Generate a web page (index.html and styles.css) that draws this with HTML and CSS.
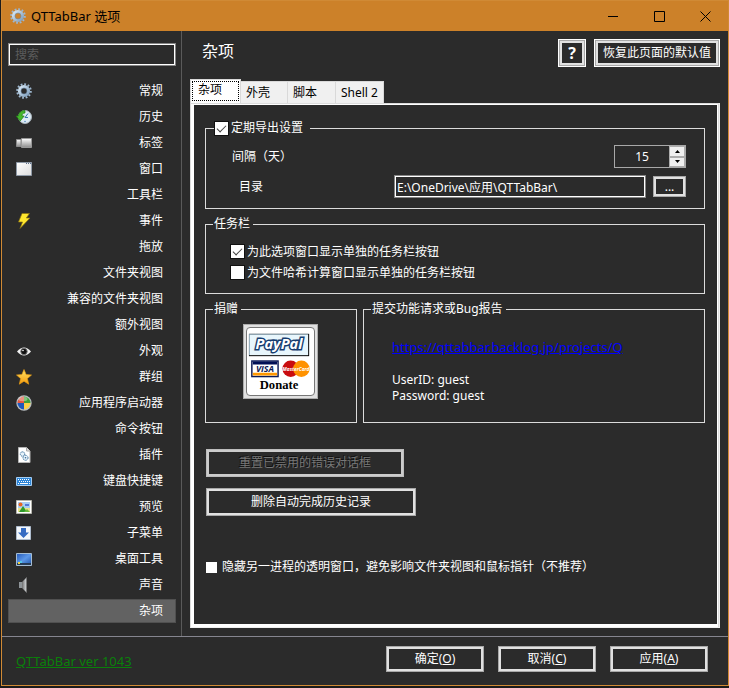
FILE: index.html
```html
<!DOCTYPE html>
<html lang="zh-CN">
<head>
<meta charset="utf-8">
<title>QTTabBar 选项</title>
<link rel="stylesheet" href="styles.css">
</head>
<body>
<svg class="defs" width="0" height="0" aria-hidden="true">
  <defs>
    <linearGradient id="steel" x1="0" y1="0" x2="1" y2="1"><stop offset="0" stop-color="#d7e8f6"/><stop offset="1" stop-color="#7f9fbd"/></linearGradient>
    <linearGradient id="silver" x1="0" y1="0" x2="0" y2="1"><stop offset="0" stop-color="#ffffff"/><stop offset="1" stop-color="#8c8c8c"/></linearGradient>
    <linearGradient id="sheet" x1="0" y1="0" x2="1" y2="1"><stop offset="0" stop-color="#ffffff"/><stop offset="1" stop-color="#dcdcdc"/></linearGradient>
    <linearGradient id="gold" x1="0" y1="0" x2="0" y2="1"><stop offset="0" stop-color="#ffe566"/><stop offset="1" stop-color="#f59a0c"/></linearGradient>
    <linearGradient id="blue" x1="0" y1="0" x2="1" y2="1"><stop offset="0" stop-color="#2458b8"/><stop offset=".5" stop-color="#5c98e8"/><stop offset="1" stop-color="#1d50a8"/></linearGradient>
    <linearGradient id="cone" x1="0" y1="0" x2="1" y2="0"><stop offset="0" stop-color="#6e6e6e"/><stop offset="1" stop-color="#d8dcdf"/></linearGradient>
    <g id="gear">
      <circle cx="8" cy="8" r="6.8" fill="none" stroke="#9db7cf" stroke-width="2" stroke-dasharray="1.8 1.76"/>
      <circle cx="8" cy="8" r="4.6" fill="none" stroke="url(#steel)" stroke-width="3"/>
      <circle cx="8" cy="8" r="3" fill="none" stroke="#6f8ba8" stroke-width=".6"/>
    </g>
  </defs>
</svg>
<div class="window">
  <header class="titlebar">
    <svg class="icon" viewBox="0 0 16 16"><use href="#gear"/></svg>
    <span class="caption">QTTabBar 选项</span>
    <button class="sys" aria-label="最小化"><svg viewBox="0 0 11 11"><path d="M0 5.5h10"/></svg></button>
    <button class="sys" aria-label="最大化"><svg viewBox="0 0 11 11"><path d="M.5.5h10v10h-10z"/></svg></button>
    <button class="sys" aria-label="关闭"><svg viewBox="0 0 11 11"><path d="M.5.5l10 10M10.500.5l-10 10"/></svg></button>
  </header>

  <div class="body">
    <nav class="sidebar">
      <input class="field search" type="text" placeholder="搜索" aria-label="搜索">
      <ul class="menu">
        <li><button><svg class="icon" viewBox="0 0 16 16"><use href="#gear"/></svg>常规</button></li>
        <li><button><svg class="icon" viewBox="0 0 16 16"><circle cx="9" cy="8" r="6.500" fill="#dcebf5" stroke="#a9b4bb"/><path d="M9 8.500l3-4M9 8.500h3" stroke="#3978b0" fill="none"/><circle cx="9" cy="12.500" r=".7" fill="#3978b0"/><path d="M9 1.500C5 1.500 2.500 4 2.500 7H.2l4 5 4-5H6c0-2 1-3 3-3z" fill="#45b72c" stroke="#1f7d14" stroke-width=".7"/></svg>历史</button></li>
        <li><button><svg class="icon" viewBox="0 0 16 16"><path d="M.5 4.500H5v7H.5z" fill="url(#silver)" stroke="#8c8c8c"/><path d="M5.500 3.500h10v9h-10z" fill="url(#silver)" stroke="#999"/></svg>标签</button></li>
        <li><button><svg class="icon" viewBox="0 0 16 16"><path d="M.5 1.500h15v13H.5z" fill="url(#sheet)" stroke="#8e99a6"/><path d="M10 2.500h1m1 0h1m1 0h1" stroke="#5d6f8a"/></svg>窗口</button></li>
        <li><button>工具栏</button></li>
        <li><button><svg class="icon" viewBox="0 0 16 16"><path d="M6 .5h7.500L10.300 5H14L4 15.500 6.500 9H2.500z" fill="#ffe72e" stroke="#8d7310" stroke-width=".7"/></svg>事件</button></li>
        <li><button>拖放</button></li>
        <li><button>文件夹视图</button></li>
        <li><button>兼容的文件夹视图</button></li>
        <li><button>额外视图</button></li>
        <li><button><svg class="icon" viewBox="0 0 16 16"><path d="M1 8.500Q4.500 4.500 8 4.500t7 4Q11.500 12.500 8 12.500t-7-4z" fill="#f2f2f2"/><circle cx="8" cy="8.500" r="3.200" fill="#111" stroke="#777"/><circle cx="7" cy="7.500" r=".8" fill="#fff"/></svg>外观</button></li>
        <li><button><svg class="icon" viewBox="0 0 16 16"><path d="M8 .5l2.100 5 5.400.5-4.100 3.600 1.300 5.600L8 12.200l-4.700 3 1.300-5.600L.5 6l5.400-.5z" fill="url(#gold)" stroke="#e39a14" stroke-width=".7"/></svg>群组</button></li>
        <li><button><svg class="icon" viewBox="0 0 16 16"><circle cx="8" cy="8" r="7.700" fill="#b9bfc2"/><path d="M8 8V1.500A6.500 6.500 0 0 0 1.500 8z" fill="#e3573f"/><path d="M8 8h6.500A6.500 6.500 0 0 0 8 1.500z" fill="#3fa03a"/><path d="M8 8v6.500A6.500 6.500 0 0 0 14.500 8z" fill="#fbd046"/><path d="M8 8H1.500A6.500 6.500 0 0 0 8 14.500z" fill="#1f58bc"/><ellipse cx="7" cy="4" rx="4.500" ry="2.200" fill="#fff" opacity=".35"/></svg>应用程序启动器</button></li>
        <li><button>命令按钮</button></li>
        <li><button><svg class="icon" viewBox="0 0 16 16"><path d="M2.500.5h8l3.500 3.500v11.500H2.500z" fill="#fff" stroke="#b5b5b5"/><path d="M10.500.5V4H14" fill="#ddd" stroke="#aaa"/><circle cx="6.500" cy="7" r="2.200" fill="#e8f3fb" stroke="#356c99" stroke-dasharray="1.200 .6"/><circle cx="9.500" cy="10.800" r="2.500" fill="#e8f3fb" stroke="#356c99" stroke-dasharray="1.200 .6"/><circle cx="9.500" cy="10.800" r=".8" fill="#356c99"/></svg>插件</button></li>
        <li><button><svg class="icon" viewBox="0 0 16 16"><path d="M.5 4.500h15v8H.5z" fill="#2e86d8" stroke="#a4cdf2"/><path d="M2 6.500h12M3 8.500h11" stroke="#fff" stroke-dasharray="1 1"/><path d="M2 10.500h1m1 0h8m1 0h1" stroke="#fff"/></svg>键盘快捷键</button></li>
        <li><button><svg class="icon" viewBox="0 0 16 16"><path d="M.5 1.500h15v13H.5z" fill="#fff" stroke="#b7b7ae"/><path d="M2 3h12v6H2z" fill="#a8cdf5"/><path d="M2 9h12v4H2z" fill="#e9e28a"/><path d="M3 13l4-6 4 6z" fill="#2f9a2b"/><path d="M8 13l3-3 3 3z" fill="#68bb3d"/><circle cx="4.500" cy="5.500" r="2" fill="#e8651f"/><path d="M9 5h4v2H9z" fill="#5277d8"/></svg>预览</button></li>
        <li><button><svg class="icon" viewBox="0 0 16 16"><path d="M.5 1.500h14v13H.5z" fill="#f3f7fb" stroke="#aebccd"/><path d="M5 3h5v4.500h3L7.500 13 2 7.500h3z" fill="#356bc2"/></svg>子菜单</button></li>
        <li><button><svg class="icon" viewBox="0 0 16 16"><path d="M.5 2.500h15v12H.5z" fill="url(#blue)" stroke="#a5bdd3"/><path d="M1 12h14v2H1z" fill="#263b55"/><path d="M2 11h2v2H2z" fill="#f5d33d"/><path d="M4 10h2v2H4z" fill="#54c8e8"/></svg>桌面工具</button></li>
        <li><button><svg class="icon" viewBox="0 0 16 16"><path d="M3 5h3v6H3z" fill="#8d9397"/><path d="M6 5l4.500-4.500v15L6 11z" fill="url(#cone)"/><path d="M10.500.5v15" stroke="#777"/></svg>声音</button></li>
        <li><button class="selected" aria-current="page">杂项</button></li>
      </ul>
    </nav>

    <main class="main">
      <div class="heading">
        <h1>杂项</h1>
        <button class="btn default help" aria-label="帮助"><b>?</b></button>
        <button class="btn default">恢复此页面的默认值</button>
      </div>
      <div class="tabs" role="tablist">
        <button class="tab active" role="tab" aria-selected="true">杂项</button>
        <button class="tab" role="tab">外壳</button>
        <button class="tab" role="tab">脚本</button>
        <button class="tab" role="tab">Shell 2</button>
      </div>
      <section class="panel" role="tabpanel">
        <div class="page">
          <fieldset class="group export">
            <legend><label class="check"><input type="checkbox" checked>定期导出设置</label></legend>
            <div class="row">
              <label for="days">间隔（天）</label>
              <span class="spinner">
                <input id="days" type="text" inputmode="numeric" value="15">
                <span class="arrows">
                  <button aria-label="增加"><svg viewBox="0 0 5 3"><path d="M0 3h5L2.500 0z"/></svg></button>
                  <button aria-label="减少"><svg viewBox="0 0 5 3"><path d="M0 0h5L2.500 3z"/></svg></button>
                </span>
              </span>
            </div>
            <div class="row directory">
              <label for="dir">目录</label>
              <input id="dir" class="field" type="text" value="E:\OneDrive\应用\QTTabBar\">
              <button class="btn browse" aria-label="浏览">...</button>
            </div>
          </fieldset>

          <fieldset class="group taskbar">
            <legend>任务栏</legend>
            <label class="check"><input type="checkbox" checked>为此选项窗口显示单独的任务栏按钮</label>
            <label class="check"><input type="checkbox">为文件哈希计算窗口显示单独的任务栏按钮</label>
          </fieldset>

          <div class="pair">
            <fieldset class="group donate">
              <legend>捐赠</legend>
              <button class="paypal" aria-label="PayPal Donate">
                <svg viewBox="0 0 69 69">
                  <rect x="2.500" y="6.500" width="61" height="22" fill="#e8f6fc" stroke="#000"/>
                  <path d="M2.500 28V6.500H63" fill="none" stroke="#a9c4d4"/>
                  <text class="pp" x="33" y="22" text-anchor="middle">PayPal</text>
                  <rect x="5" y="34" width="27" height="16" fill="#fff" stroke="#0c1a55" stroke-width="1.500"/>
                  <path d="M6 36h25" stroke="#000f55" stroke-width="3"/>
                  <path d="M6 47.500h25" stroke="#ff9800" stroke-width="3"/>
                  <text class="visa" x="18.500" y="45" text-anchor="middle">VISA</text>
                  <circle cx="45" cy="42" r="8.500" fill="#c90c0f"/><circle cx="56" cy="42" r="8.500" fill="#ff9200"/>
                  <text class="mc" x="50.500" y="44" text-anchor="middle">MasterCard</text>
                  <text class="give" x="33" y="63" text-anchor="middle">Donate</text>
                </svg>
              </button>
            </fieldset>
            <fieldset class="group report">
              <legend>提交功能请求或Bug报告</legend>
              <a href="https://qttabbar.backlog.jp/projects/Q">https://qttabbar.backlog.jp/projects/Q</a>
              <p>UserID: guest<br>Password: guest</p>
            </fieldset>
          </div>

          <div class="actions">
            <button class="btn reset" disabled>重置已禁用的错误对话框</button>
            <button class="btn clear">删除自动完成历史记录</button>
          </div>
          <label class="check plain"><input type="checkbox">隐藏另一进程的透明窗口，避免影响文件夹视图和鼠标指针（不推荐）</label>
        </div>
      </section>
    </main>
  </div>

  <footer class="footer">
    <a class="version" href="#">QTTabBar ver 1043</a>
    <button class="btn dialog">确定(<u>O</u>)</button>
    <button class="btn dialog">取消(<u>C</u>)</button>
    <button class="btn dialog">应用(<u>A</u>)</button>
  </footer>
</div>
</body>
</html>
```

FILE: styles.css
```css
* { box-sizing: border-box; }

body {
  margin: 0;
  padding: 0 0 2px 1px;
  min-height: 100vh;
  display: flex;
  background: #1b1b1b;
  color: #fff;
  font: 12px/16px "Noto Sans", "Noto Sans CJK SC", sans-serif;
}

button, input { font: inherit; color: inherit; border-radius: 0; }
button { padding: 0; border: 0; background: none; }
.defs { position: absolute; }

.window {
  flex: 1;
  display: flex;
  flex-direction: column;
  border: 1px solid #d08a35;
  background: #2b2b2b;
}

.titlebar {
  display: flex;
  align-items: center;
  height: 30px;
  padding-left: 8px;
  background: #cc8129;
  color: #000;
}
.icon { width: 16px; height: 16px; flex: none; }
.caption { flex: 1; padding-left: 5px; font-size: 13px; }
.sys { width: 46px; height: 30px; display: grid; place-items: center; }
.sys svg { width: 11px; height: 11px; fill: none; stroke: #000; }

.body { flex: 1; display: flex; border-bottom: 1px solid #85858f; }

.sidebar { width: 180px; padding: 12px 5px 0 6px; border-right: 1px solid #5a5a5a; }

.field {
  height: 23px;
  padding: 0 2px;
  border: 1px solid #858585;
  outline: 1px solid #fff;
  outline-offset: -2px;
  background: #2b2b2b;
}
.search { display: block; width: 100%; padding-left: 6px; }
.search::placeholder { color: #5c5c5c; opacity: 1; }

.menu { list-style: none; margin: 12px 0 0; padding: 0; }
.menu li { height: 26px; padding: 1px 0; }
.menu button {
  display: flex;
  justify-content: flex-end;
  align-items: center;
  width: 100%;
  height: 24px;
  padding: 0 12px 0 7px;
  border: 1px solid transparent;
}
.menu .icon { margin-right: auto; }
.menu .selected { background: #626262; border-color: #505050; }

.main { flex: 1; min-width: 0; display: flex; flex-direction: column; padding: 8px; }

.heading { display: flex; gap: 8px; align-items: center; }
h1 { flex: 1; margin: 0; padding: 0 0 4px 12px; font-size: 16px; line-height: 24px; font-weight: 400; }

.btn {
  height: 28px;
  border: 1px solid #a8a8a8;
  box-shadow: inset 0 0 0 2px #e1e1e1;
  background: #2b2b2b;
}
.btn.default {
  padding: 0 8px;
  border-color: #fff;
  box-shadow: inset 0 0 0 1px #a8a8a8, inset 0 0 0 3px #e1e1e1;
}
.btn.help { width: 28px; padding: 0; font-size: 16px; }

.tabs { display: flex; align-items: flex-end; height: 24px; margin-top: 12px; }
.tab {
  height: 22px;
  padding: 0 3px 0 5px;
  min-width: 48px;
  border: 1px solid #d9d9d9;
  border-left: 0;
  border-bottom: 0;
  background: #f0f0f0;
  color: #000;
  text-align: left;
}
.tab.active {
  width: 51px;
  height: 24px;
  padding: 0 7px 3px;
  border: 1px solid #d9d9d9;
  border-bottom: 0;
  background: #fff;
  outline: 1px dotted #000;
  outline-offset: -3px;
}
.tab.active + .tab { min-width: 47px; }

.panel {
  flex: 1;
  border: 1px solid #dcdcdc;
  border-right: 2px solid #f0f0f0;
  border-bottom: 1px solid #f0f0f0;
}
.page {
  height: 100%;
  padding: 15px 12px 48px 11px;
  border: solid #fff;
  border-width: 1px 1px 3px 3px;
  box-shadow: 1px 0 0 #dcdcdc;
}

.group {
  min-width: 0;
  margin: 0 0 7px;
  padding: 0;
  border: 1px solid #dcdcdc;
}
legend { height: 17px; margin-left: 7px; padding: 0 3px 0 1px; }

.check { display: flex; align-items: center; gap: 3px; }
.check input {
  appearance: none;
  width: 13px;
  height: 13px;
  margin: 0;
  display: grid;
  place-items: center;
  background: #fff;
  outline: 1px solid #111;
}
.check input:checked::after {
  content: "";
  width: 8px;
  height: 4px;
  margin-bottom: 2px;
  border: solid #444;
  border-width: 0 0 1px 1px;
  rotate: -45deg;
}

.export { height: 89px; padding: 8px 18px 0 26px; }
.export legend { margin-left: -18px; padding-right: 7px; }
.row { display: flex; align-items: center; height: 23px; margin-bottom: 7px; }
.row label { flex: 1; }
.directory label { padding-left: 7px; }
.directory .field { width: 252px; }
.browse { width: 33px; height: 21px; margin-left: 7px; line-height: 12px; }

.spinner { display: flex; width: 72px; height: 23px; border: 1px solid #a8a8a8; }
.spinner input { flex: 1; min-width: 0; padding: 0; border: 0; background: none; text-align: center; }
.arrows { width: 16px; display: flex; flex-direction: column; background: #f0f0f0; }
.arrows button { flex: 1; display: grid; place-items: center; border: 1px solid #adadad; }
.arrows svg { width: 5px; height: 3px; }

.taskbar { height: 78px; padding: 8px 25px 0; }
.taskbar legend { margin-left: -18px; }
.taskbar .check { height: 21px; }

.pair { display: grid; grid-template-columns: 152px 1fr; gap: 6px; }
.pair .group { height: 122px; margin: 0; }
.paypal {
  display: block;
  width: 75px;
  height: 75px;
  margin: 6px 38px 0 37px;
  border: 1px solid #adadad;
  padding: 2px;
  background: #e1e1e1;
}
.paypal svg { display: block; width: 69px; height: 69px; border: 1px solid #777; border-radius: 4px; background: #fff; }
.pp { font: italic 700 15px "Open Sans", sans-serif; fill: #fff; stroke: #173d70; stroke-width: 3px; paint-order: stroke; }
.visa { font: italic 700 9px "Open Sans", sans-serif; fill: #0c1a55; }
.mc { font: italic 700 5px "Open Sans", sans-serif; fill: #fff; }
.give { font: 700 13px "Liberation Serif", serif; fill: #000; }

.report { padding: 21px 28px 0; }
.report legend { margin-left: -21px; }
.report a { color: #0000ff; font-size: 13px; }
.report p { margin: 16px 0 0; }

.actions { display: flex; flex-direction: column; align-items: flex-start; gap: 11px; margin: 26px 0 43px 1px; }
.reset { width: 198px; color: #777; text-shadow: -1px -1px #111; border-color: #bdbdbd; box-shadow: inset 0 0 0 2px #cccccc; }
.clear { width: 210px; }
.plain { padding-left: 1px; gap: 5px; }
.plain input { width: 11px; height: 11px; outline: 0; }

.footer { display: flex; align-items: center; gap: 14px; height: 48px; padding: 0 20px 4px 14px; }
.version { margin-right: auto; color: #0a800a; padding-top: 4px; font-size: 13px; }
.dialog { width: 98px; height: 26px; }
```
